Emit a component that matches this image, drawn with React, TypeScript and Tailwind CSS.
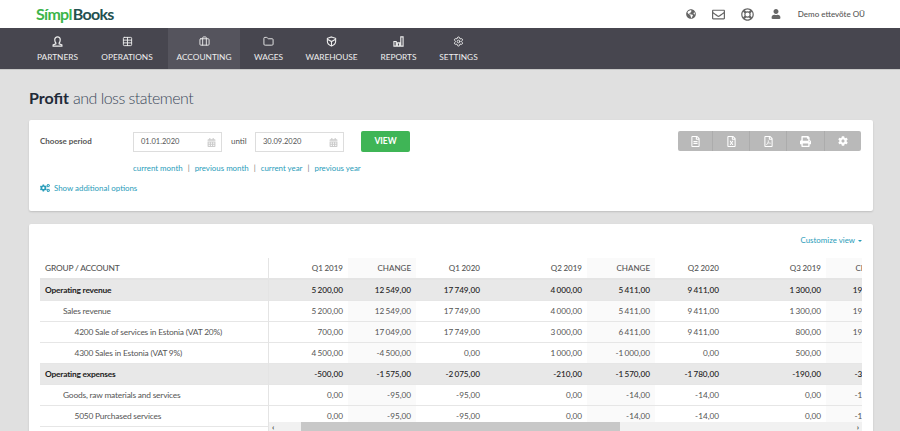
import { Settings, Briefcase, Folder, Table } from 'lucide-react'
import { FaGlobeAmericas, FaRegEnvelope, FaRegLifeRing, FaUser, FaCalendarAlt, FaCogs, FaPrint, FaCog, FaRegFileAlt, FaRegFileExcel, FaRegFilePdf } from 'react-icons/fa'

const PartnerIcon = () => (
  <svg width="11" height="11" viewBox="0 0 12 12" fill="none" stroke="currentColor" strokeWidth="1.3">
    <path d="M4.2 7.6C3.2 6.6 3 5.4 3 4.2 3 2.4 4.2 1 6 1s3 1.4 3 3.2c0 1.2-.2 2.4-1.2 3.4v1l3 1.2V11H1.2V9.8l3-1.2z" />
  </svg>
)

const WarehouseIcon = () => (
  <svg width="11" height="11" viewBox="0 0 12 12" fill="none" stroke="currentColor" strokeWidth="1.2">
    <path d="M6 1l4.5 1.5V6c0 2.4-2 4-4.5 5C3.5 10 1.500 8.400 1.500 6V2.500z" />
    <path d="M1.500 3.500L6 6l4.500-2.500M6 6v5" />
  </svg>
)

const ReportsIcon = () => (
  <svg width="11" height="11" viewBox="0 0 12 12" fill="none" stroke="currentColor" strokeWidth="1.2">
    <path d="M1 11V6h2.500v5zM4.750 11V7.500h2.500V11zM8.500 11V1H11v10z" />
  </svg>
)

const navItems = [
  { label: 'PARTNERS', icon: <PartnerIcon />, w: 'w-[57px]' },
  { label: 'OPERATIONS', icon: <Table size={11} />, w: 'w-[82px]' },
  { label: 'ACCOUNTING', icon: <Briefcase size={11} />, w: 'w-[72px]', active: true },
  { label: 'WAGES', icon: <Folder size={11} />, w: 'w-[57px]' },
  { label: 'WAREHOUSE', icon: <WarehouseIcon />, w: 'w-[69px]' },
  { label: 'REPORTS', icon: <ReportsIcon />, w: 'w-[65px]' },
  { label: 'SETTINGS', icon: <Settings size={11} />, w: 'w-[55px]' },
]

const columns = [
  { label: 'Q1 2019', w: 'w-[79px]' },
  { label: 'CHANGE', w: 'w-[68px]', shade: true },
  { label: 'Q1 2020', w: 'w-[69px]' },
  { label: 'Q2 2019', w: 'w-[102px]' },
  { label: 'CHANGE', w: 'w-[68px]', shade: true },
  { label: 'Q2 2020', w: 'w-[69px]' },
  { label: 'Q3 2019', w: 'w-[102px]' },
  { label: 'CHANGE', w: 'w-[68px]', shade: true },
]

const rows = [
  { name: 'Operating revenue', level: 0, values: ['5 200,00', '12 549,00', '17 749,00', '4 000,00', '5 411,00', '9 411,00', '1 300,00', '19 000,00'] },
  { name: 'Sales revenue', level: 1, values: ['5 200,00', '12 549,00', '17 749,00', '4 000,00', '5 411,00', '9 411,00', '1 300,00', '19 000,00'] },
  { name: '4200 Sale of services in Estonia (VAT 20%)', level: 2, values: ['700,00', '17 049,00', '17 749,00', '3 000,00', '6 411,00', '9 411,00', '800,00', '19 000,00'] },
  { name: '4300 Sales in Estonia (VAT 9%)', level: 2, values: ['4 500,00', '-4 500,00', '0,00', '1 000,00', '-1 000,00', '0,00', '500,00', ''] },
  { name: 'Operating expenses', level: 0, values: ['-500,00', '-1 575,00', '-2 075,00', '-210,00', '-1 570,00', '-1 780,00', '-190,00', '-3 000,00'] },
  { name: 'Goods, raw materials and services', level: 1, values: ['0,00', '-95,00', '-95,00', '0,00', '-14,00', '-14,00', '0,00', '-1 000,00'] },
  { name: '5050 Purchased services', level: 2, values: ['0,00', '-95,00', '-95,00', '0,00', '-14,00', '-14,00', '0,00', '-1 000,00'] },
]

const indent = ['pl-[5px]', 'pl-[23px]', 'pl-[34.5px]']

export default function App() {
  return (
    <div className="h-[431px] w-[900px] overflow-hidden bg-[#e0e0e0] font-['Lato',sans-serif] text-[#555]">
      <header className="flex h-[28px] items-center justify-between bg-white pl-[36px] pr-[35px]">
        <div className="text-[16px] font-bold leading-none tracking-[-0.7px]">
          <span className="text-[#3cb54a]">Símpl</span>
          <span className="ml-[1px] text-[#23504f]">Books</span>
        </div>
        <div className="flex items-center text-[#666]">
          <FaGlobeAmericas size={10} />
          <FaRegEnvelope size={13} className="ml-[16px]" />
          <FaRegLifeRing size={13} className="ml-[16px]" />
          <FaUser size={10} className="ml-[17px]" />
          <span className="ml-[17px] text-[8px] font-medium text-[#555]">Demo ettevõte OÜ</span>
        </div>
      </header>

      <nav className="flex h-[42px] border-b border-[#c8c8c8] bg-[#47464f] pl-[29px] text-[#eee]">
        {navItems.map(item => (
          <div key={item.label} className={`flex h-full flex-col items-center pt-[8px] ${item.w} ${item.active ? 'bg-[#55545d]' : ''}`}>
            {item.icon}
            <span className="mt-[4px] text-[8.300px] leading-[12px]">{item.label}</span>
          </div>
        ))}
      </nav>

      <h1 className="ml-[29px] mt-[17px] text-[16px] font-light leading-[22px] tracking-[-0.5px] text-[#3d4a5c]">
        <span className="font-bold tracking-normal text-[#1f2a38]">Profit</span> and loss statement
      </h1>

      <section className="ml-[29px] mr-[27px] mt-[11px] h-[91px] rounded-[2px] bg-white pl-[11px] pr-[11px] pt-[12px] shadow-[0_1px_2px_rgba(0,0,0,0.15)]">
        <div className="flex items-start">
          <span className="w-[93px] pt-[3px] text-[8px] font-bold leading-[13px]">Choose period</span>
          <div className="flex h-[20px] w-[89px] items-center justify-between border border-[#ddd] pl-[7px] pr-[5px] text-[7.500px]">
            01.01.2020
            <FaCalendarAlt size={9} className="text-[#ccc]" />
          </div>
          <span className="ml-[9px] mr-[8px] w-[16px] pt-[3px] text-[8px] leading-[13px]">until</span>
          <div className="flex h-[20px] w-[89px] items-center justify-between border border-[#ddd] pl-[7px] pr-[5px] text-[7.500px]">
            30.09.2020
            <FaCalendarAlt size={9} className="text-[#ccc]" />
          </div>
          <button className="-mt-[1px] ml-[17px] h-[21px] w-[49px] rounded-[2px] bg-[#3fb556] text-[8.500px] font-bold text-white">VIEW</button>
          <div className="-mt-[1px] ml-auto mr-[1px] flex h-[20px] w-[183px] rounded-[2px] bg-[#b9b9b9] text-white">
            <div className="flex w-[35px] items-center justify-center border-r border-[#acacac]"><FaRegFileAlt size={11} /></div>
            <div className="flex w-[37px] items-center justify-center border-r border-[#acacac]"><FaRegFileExcel size={11} /></div>
            <div className="flex w-[37px] items-center justify-center border-r border-[#acacac]"><FaRegFilePdf size={11} /></div>
            <div className="flex w-[38px] items-center justify-center border-r border-[#acacac]"><FaPrint size={11} /></div>
            <div className="flex flex-1 items-center justify-center"><FaCog size={10} /></div>
          </div>
        </div>
        <div className="ml-[93px] mt-[10px] flex gap-[5px] text-[7.900px] leading-[12px] text-[#2a9dba]">
          <span>current month</span><span className="text-[#777]">|</span>
          <span>previous month</span><span className="text-[#777]">|</span>
          <span>current year</span><span className="text-[#777]">|</span>
          <span>previous year</span>
        </div>
        <div className="mt-[8px] flex items-center gap-[4px] text-[7.900px] leading-[12px] text-[#2a9dba]">
          <FaCogs size={10} />
          Show additional options
        </div>
      </section>

      <section className="ml-[29px] mr-[27px] mt-[13px] h-[260px] rounded-[2px] bg-white pl-[11px] pr-[11px] shadow-[0_1px_2px_rgba(0,0,0,0.15)]">
        <div className="flex h-[34px] items-center justify-end gap-[3px] pb-[1px] text-[7.900px] text-[#2a9dba]">
          Customize view
          <span className="h-0 w-0 border-x-[2px] border-t-[2px] border-x-transparent border-t-[#2a9dba]" />
        </div>
        <div className="flex h-[173px]">
          <div className="w-[229px] shrink-0 border-r border-[#e4e4e4]">
            <div className="flex h-[22px] items-center border-b-2 border-[#e4e4e4] pl-[5px] pt-[1px] text-[8.400px] font-medium tracking-[-0.2px]">GROUP / ACCOUNT</div>
            {rows.map(row => (
              <div key={row.name} className={`flex h-[21px] items-center border-b border-[#e6e6e6] pt-[1px] text-[8.400px] tracking-[-0.2px] ${indent[row.level]} ${row.level === 0 ? 'bg-[#e8e8e8] font-bold text-[#222]' : ''}`}>
                {row.name}
              </div>
            ))}
          </div>
          <div className="relative min-w-0 flex-1 overflow-hidden">
            <div className="flex w-[625px]">
              {columns.map((col, i) => (
                <div key={i} className={`shrink-0 ${col.w}`}>
                  <div className={`flex h-[22px] items-center justify-end border-b-2 border-[#e4e4e4] pr-[5px] text-[8px] font-medium [word-spacing:-0.5px] ${col.shade ? 'bg-[#fafafa]' : ''}`}>{col.label}</div>
                  {rows.map(row => (
                    <div key={row.name} className={`flex h-[21px] items-center justify-end border-b border-[#e6e6e6] pr-[5px] pt-[1px] text-[8.200px] [word-spacing:-1px] ${row.level === 0 ? 'bg-[#e8e8e8] font-medium text-[#222]' : col.shade ? 'bg-[#fafafa]' : ''}`}>{row.values[i]}</div>
                  ))}
                </div>
              ))}
            </div>
            <div className="absolute bottom-0 left-0 flex h-[9px] w-full items-center bg-[#f1f1f1] text-[#444]">
              <span className="w-[32px] pl-[3px] text-[8px] font-bold leading-none">‹</span>
              <div className="h-full w-[319px] bg-[#c8c8c8]" />
              <span className="ml-auto pr-[3px] text-[8px] font-bold leading-none">›</span>
            </div>
          </div>
        </div>
      </section>
    </div>
  )
}
